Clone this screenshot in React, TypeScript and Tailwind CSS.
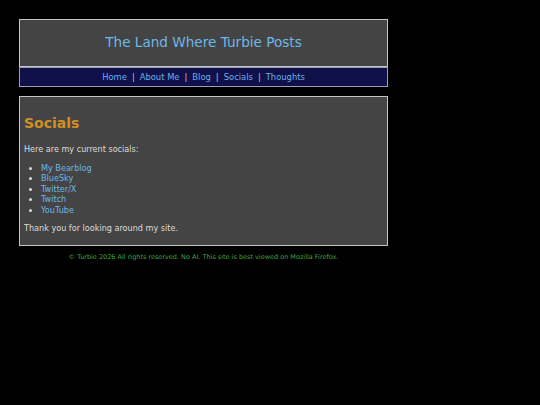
import React from 'react';

const navLinks = ['Home', 'About Me', 'Blog', 'Socials', 'Thoughts'];
const socials = ['My Bearblog', 'BlueSky', 'Twitter/X', 'Twitch', 'YouTube'];

const App: React.FC = () => {
  return (
    <div className="min-h-screen w-full bg-black pt-[19px] pl-[19px] font-['Verdana','DejaVu_Sans',sans-serif]">
      <div className="w-[369px]">
        {/* Header */}
        <header className="h-[48px] border border-[#c4c4c4] bg-[#444444] flex items-center justify-center">
          <h1 className="text-[13.6px] text-[#6cb8e6] leading-none">The Land Where Turbie Posts</h1>
        </header>

        {/* Nav */}
        <nav className="h-[20px] border border-[#9c9cb4] bg-[#10104a] flex items-center justify-center text-[8.4px] text-[#c8c8c8]">
          {navLinks.map((link, i) => (
            <React.Fragment key={link}>
              {i > 0 && <span className="mx-[5px]">|</span>}
              <a className="text-[#6cb0ec]">{link}</a>
            </React.Fragment>
          ))}
        </nav>

        {/* Main content */}
        <main className="mt-[9px] h-[150px] border border-[#c4c4c4] bg-[#444444] px-[4px] text-[8.1px] text-[#dcdcdc]">
          <h2 className="mt-[19px] text-[14px] font-bold leading-none text-[#d08f24]">Socials</h2>
          <p className="mt-[14px] leading-[11px]">Here are my current socials:</p>
          <ul className="mt-[8px] pl-[17px] list-disc leading-[10.4px]">
            {socials.map(s => (
              <li key={s}>
                <a className="text-[#6cb8e6]">{s}</a>
              </li>
            ))}
          </ul>
          <p className="mt-[8px] leading-[11px]">Thank you for looking around my site.</p>
        </main>

        {/* Footer */}
        <footer className="mt-[7px] text-center text-[6.5px] text-[#3ea63e]">
          © Turbie 2026 All rights reserved. No AI. This site is best viewed on Mozilla Firefox.
        </footer>
      </div>
    </div>
  );
};

export default App;
